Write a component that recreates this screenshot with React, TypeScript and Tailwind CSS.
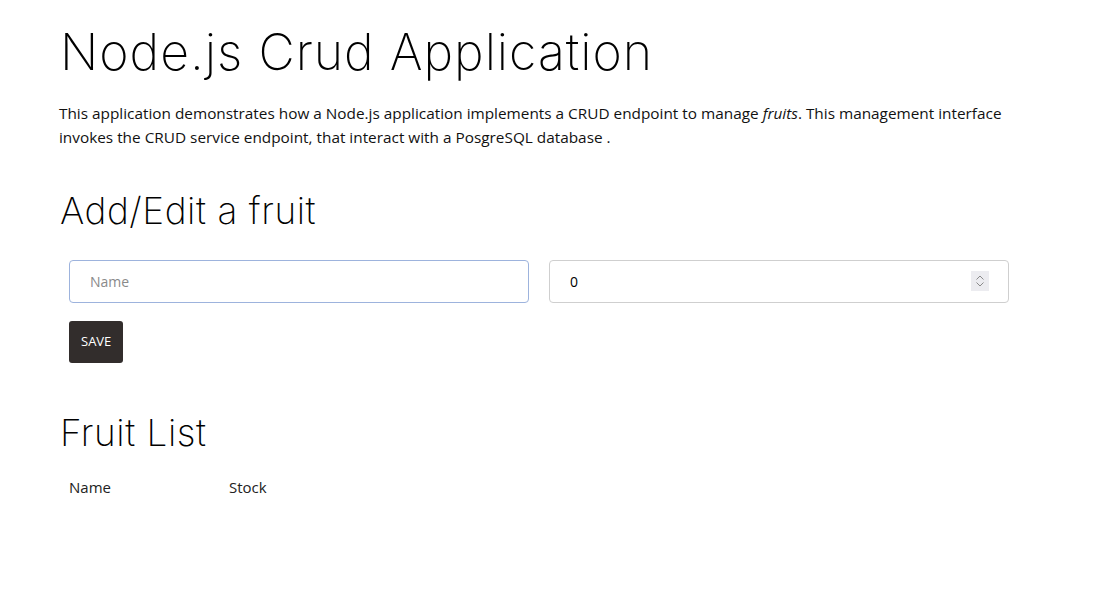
import { useState } from 'react';

const headingFont = { fontFamily: 'Inter, "Noto Sans", sans-serif' };

const Spinner = () => (
  <div className="absolute right-[20px] top-[11px] w-[18px] h-[20px] bg-[#ececf0] flex flex-col items-center justify-center gap-[2px]">
    <svg width="8" height="5" viewBox="0 0 8 5" fill="none" stroke="#8a8a8a" strokeWidth="1">
      <path d="M0.5 4.5 L4 1 L7.5 4.5" />
    </svg>
    <svg width="8" height="5" viewBox="0 0 8 5" fill="none" stroke="#8a8a8a" strokeWidth="1">
      <path d="M0.5 0.5 L4 4 L7.5 0.5" />
    </svg>
  </div>
);

export default function App() {
  const [name, setName] = useState('');
  const [stock, setStock] = useState('0');

  return (
    <div className="min-h-screen bg-white text-[#111]" style={{ fontFamily: '"Open Sans", sans-serif' }}>
      <div className="ml-[59px] w-[960px] pt-[24px]">
        <h1
          className="text-[50px] leading-[56px] font-extralight tracking-[0.02em] text-black ml-[1px]"
          style={headingFont}
        >
          Node.js Crud Application
        </h1>

        <p className="mt-[21px] text-[15.35px] leading-[24px]">
          This application demonstrates how a Node.js application implements a CRUD endpoint to manage{' '}
          <em>fruits</em>. This management interface invokes the CRUD service endpoint, that interact with a
          PosgreSQL database .
        </p>

        <h2
          className="mt-[40px] text-[37px] leading-[44px] font-extralight tracking-[0.015em] text-black ml-[1px]"
          style={headingFont}
        >
          Add/Edit a fruit
        </h2>

        <div className="mt-[27px] grid grid-cols-2">
          <div className="px-[10px]">
            <input
              value={name}
              onChange={(e) => setName(e.target.value)}
              placeholder="Name"
              className="w-full h-[43px] px-[20px] text-[14px] border border-[#9db3dd] rounded-[4px] outline-none placeholder:text-[#8a8a8a]"
            />
          </div>
          <div className="px-[10px]">
            <div className="relative">
              <input
                type="text"
                value={stock}
                onChange={(e) => setStock(e.target.value)}
                className="w-full h-[43px] px-[20px] text-[14px] border border-[#cfcfcf] rounded-[4px] outline-none text-black"
              />
              <Spinner />
            </div>
          </div>
        </div>

        <div className="px-[10px] mt-[18px]">
          <button className="h-[42px] px-[12px] bg-[#322d2c] text-white text-[13px] rounded-[3px]">SAVE</button>
        </div>

        <h2
          className="mt-[48px] text-[37px] leading-[44px] font-extralight tracking-[0.015em] text-black ml-[1px]"
          style={headingFont}
        >
          Fruit List
        </h2>

        <table className="mt-[21px] ml-[10px]">
          <thead>
            <tr className="text-left text-[15px] text-[#222]">
              <th className="w-[160px] font-medium">Name</th>
              <th className="font-medium">Stock</th>
            </tr>
          </thead>
        </table>
      </div>
    </div>
  );
}
